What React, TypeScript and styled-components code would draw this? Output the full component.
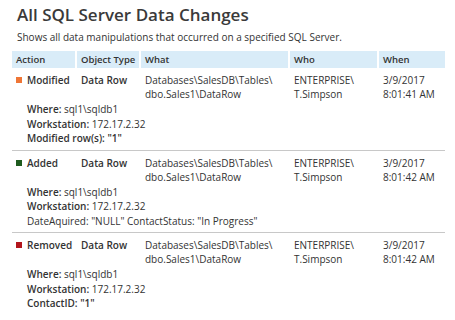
import React from 'react';
import styled, { createGlobalStyle } from 'styled-components';

const GlobalStyle = createGlobalStyle`
  body {
    margin: 0;
    background: #ffffff;
    font-family: "Open Sans", "Liberation Sans", sans-serif;
    color: #333333;
  }
`;

const Page = styled.div`
  width: 455px;
  height: 320px;
  padding: 5px 10px 0 12px;
  box-sizing: border-box;
  overflow: hidden;
`;

const Title = styled.h1`
  margin: 0 0 0 5px;
  font-size: 17px;
  line-height: 20px;
  font-weight: 600;
  color: #3a3a3a;
`;

const Subtitle = styled.p`
  margin: 6px 0 7px 5px;
  font-size: 10px;
  line-height: 13px;
  color: #333333;
`;

const columns = '63px 62px 147px 87px 66px';

const HeaderRow = styled.div`
  display: grid;
  grid-template-columns: ${columns};
  column-gap: 2px;
  width: 433px;
`;

const HeaderCell = styled.div`
  background: #d9ecf8;
  height: 17px;
  padding-left: 4px;
  font-size: 9.5px;
  font-weight: 600;
  line-height: 17px;
  color: #333333;
`;

const Row = styled.div<{ $last?: boolean }>`
  width: 433px;
  padding: 5px 0 4px;
  border-bottom: ${(p) => (p.$last ? 'none' : '1px solid #c8c8c8')};
`;

const MainLine = styled.div`
  display: grid;
  grid-template-columns: ${columns};
  column-gap: 2px;
  font-size: 10px;
  line-height: 14px;
`;

const Cell = styled.div<{ $strong?: boolean }>`
  padding-left: 4px;
  font-weight: ${(p) => (p.$strong ? 600 : 400)};
  white-space: pre-line;
`;

const ActionCell = styled(Cell)`
  display: flex;
  align-items: flex-start;
  gap: 5px;
  font-weight: 600;
`;

const Marker = styled.span<{ $color: string }>`
  width: 6px;
  height: 6px;
  margin-top: 4px;
  background: ${(p) => p.$color};
  flex: none;
`;

const Details = styled.div`
  margin: 1px 0 0 15px;
  font-size: 10px;
  line-height: 14.5px;
`;

const DetailLine = styled.div<{ $strong?: boolean }>`
  font-weight: ${(p) => (p.$strong ? 600 : 400)};
`;

const Label = styled.span`
  font-weight: 600;
`;

type Change = {
  action: string;
  color: string;
  when: string;
  extra: string;
  extraStrong: boolean;
};

const changes: Change[] = [
  {
    action: 'Modified',
    color: '#ef7636',
    when: '3/9/2017\n8:01:41 AM',
    extra: 'Modified row(s): "1"',
    extraStrong: true,
  },
  {
    action: 'Added',
    color: '#1e5b1e',
    when: '3/9/2017\n8:01:42 AM',
    extra: 'DateAquired: "NULL" ContactStatus: "In Progress"',
    extraStrong: false,
  },
  {
    action: 'Removed',
    color: '#b2151c',
    when: '3/9/2017\n8:01:42 AM',
    extra: 'ContactID: "1"',
    extraStrong: true,
  },
];

export default function App() {
  return (
    <Page>
      <GlobalStyle />
      <Title>All SQL Server Data Changes</Title>
      <Subtitle>Shows all data manipulations that occurred on a specified SQL Server.</Subtitle>
      <HeaderRow>
        <HeaderCell>Action</HeaderCell>
        <HeaderCell>Object Type</HeaderCell>
        <HeaderCell>What</HeaderCell>
        <HeaderCell>Who</HeaderCell>
        <HeaderCell>When</HeaderCell>
      </HeaderRow>
      {changes.map((c, i) => (
        <Row key={c.action} $last={i === changes.length - 1}>
          <MainLine>
            <ActionCell>
              <Marker $color={c.color} />
              {c.action}
            </ActionCell>
            <Cell $strong>Data Row</Cell>
            <Cell>{'Databases\\SalesDB\\Tables\\\ndbo.Sales1\\DataRow'}</Cell>
            <Cell>{'ENTERPRISE\\\nT.Simpson'}</Cell>
            <Cell>{c.when}</Cell>
          </MainLine>
          <Details>
            <DetailLine>
              <Label>Where:</Label> sql1\sqldb1
            </DetailLine>
            <DetailLine>
              <Label>Workstation:</Label> 172.17.2.32
            </DetailLine>
            <DetailLine $strong={c.extraStrong}>{c.extra}</DetailLine>
          </Details>
        </Row>
      ))}
    </Page>
  );
}
